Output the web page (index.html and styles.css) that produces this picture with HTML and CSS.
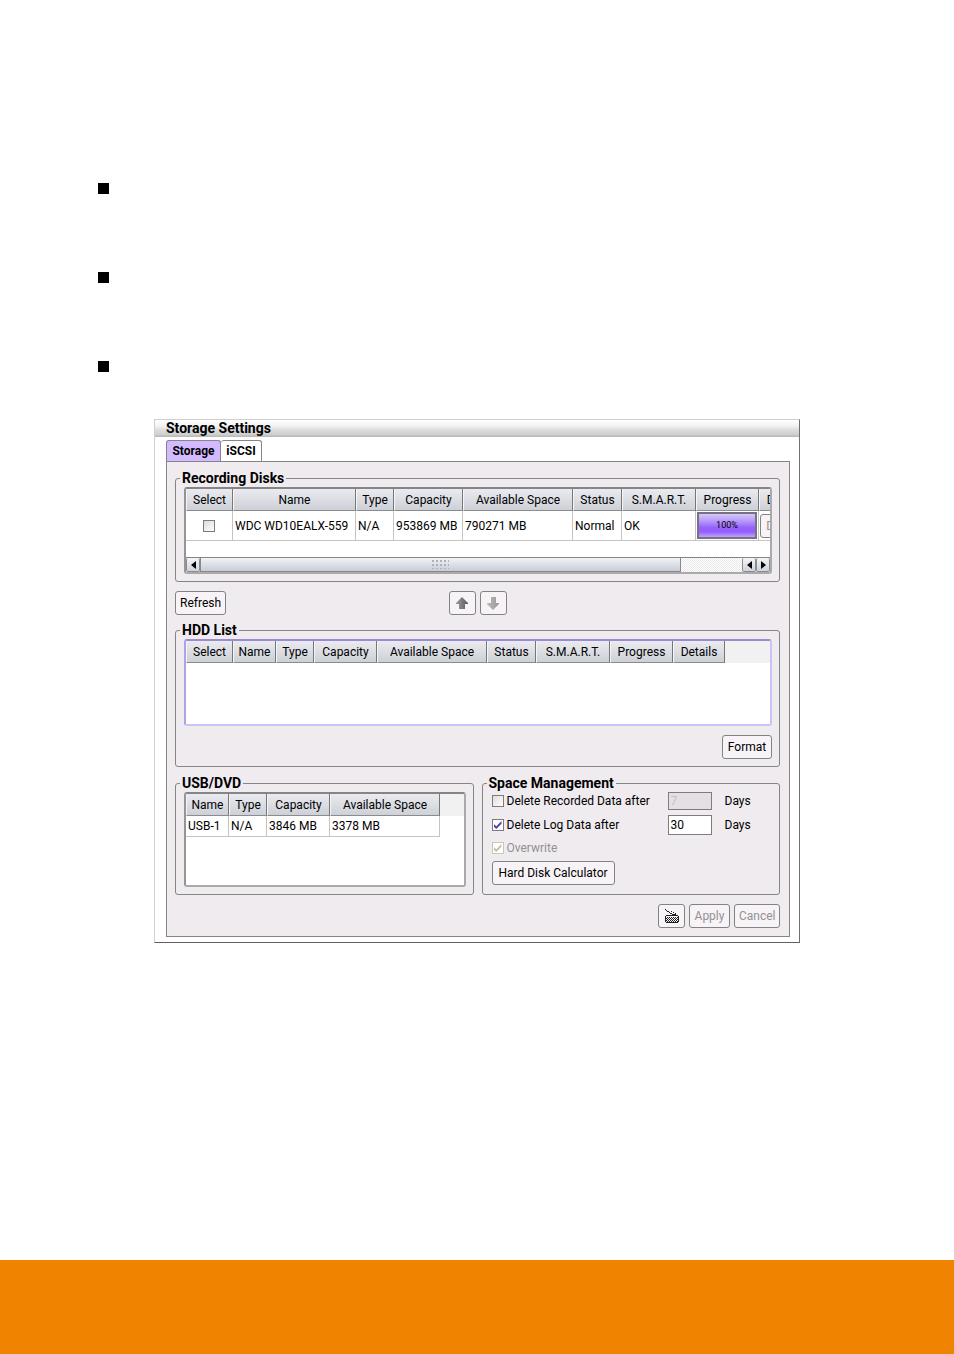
FILE: index.html
```html
<!DOCTYPE html>
<html lang="en">
<head>
<meta charset="utf-8">
<title>Storage Settings</title>
<link rel="stylesheet" href="styles.css">
</head>
<body>
<main class="page">
  <ul class="bullets">
    <li></li>
    <li></li>
    <li></li>
  </ul>

  <section class="window">
    <h1 class="window-title">Storage Settings</h1>
    <div class="window-body">
      <div class="tabs" role="tablist">
        <button class="tab tab-active" role="tab" aria-selected="true">Storage</button>
        <button class="tab" role="tab" aria-selected="false">iSCSI</button>
      </div>

      <div class="panel" role="tabpanel">
        <fieldset class="group">
          <legend>Recording Disks</legend>
          <div class="table-box disks-box">
            <div class="table-view">
              <table class="grid disks">
                <colgroup>
                  <col class="w-select"><col class="w-disk"><col class="w-type"><col class="w-capacity"><col class="w-space"><col class="w-status"><col class="w-smart"><col class="w-progress"><col class="w-details">
                </colgroup>
                <thead>
                  <tr><th>Select</th><th>Name</th><th>Type</th><th>Capacity</th><th>Available Space</th><th>Status</th><th>S.M.A.R.T.</th><th>Progress</th><th>Details</th></tr>
                </thead>
                <tbody>
                  <tr>
                    <td class="center"><input class="check" type="checkbox" aria-label="Select disk"></td>
                    <td>WDC WD10EALX-559</td>
                    <td>N/A</td>
                    <td>953869 MB</td>
                    <td>790271 MB</td>
                    <td>Normal</td>
                    <td>OK</td>
                    <td class="bar-cell"><div class="bar" role="progressbar" aria-valuenow="100">100%</div></td>
                    <td class="bar-cell"><button class="button details" disabled>Details</button></td>
                  </tr>
                </tbody>
              </table>
            </div>
            <div class="scrollbar">
              <button class="scroll-button" aria-label="Scroll left"><svg width="5" height="8" viewBox="0 0 5 8"><path d="M5 0v8L0 4z"/></svg></button>
              <div class="thumb"><span class="grip"></span></div>
              <div class="track"></div>
              <button class="scroll-button" aria-label="Scroll left"><svg width="5" height="8" viewBox="0 0 5 8"><path d="M5 0v8L0 4z"/></svg></button>
              <button class="scroll-button" aria-label="Scroll right"><svg width="5" height="8" viewBox="0 0 5 8"><path d="M0 0v8l5-4z"/></svg></button>
            </div>
          </div>
        </fieldset>

        <div class="middle">
          <button class="button refresh">Refresh</button>
          <div class="arrows">
            <button class="button icon-button" aria-label="Move up">
              <svg width="12" height="13" viewBox="0 0 12 13"><defs><linearGradient id="up" x2="1"><stop offset="0" stop-color="#9c9c9c"/><stop offset="1" stop-color="#5c5c5c"/></linearGradient></defs><path fill="url(#up)" d="M6 0l6 6v1H9v5H3V7H0V6z"/></svg>
            </button>
            <button class="button icon-button" aria-label="Move down">
              <svg width="12" height="13" viewBox="0 0 12 13"><defs><linearGradient id="down" x2="1"><stop offset="0" stop-color="#bcbcbc"/><stop offset="1" stop-color="#999"/></linearGradient></defs><path fill="url(#down)" d="M4 0h5v6h3v1l-6 6-6-6V6h4z"/></svg>
            </button>
          </div>
        </div>

        <fieldset class="group">
          <legend>HDD List</legend>
          <div class="table-box focused">
            <table class="grid">
              <colgroup>
                <col class="w-select"><col class="w-name"><col class="w-type"><col class="w-capacity-s"><col class="w-space"><col class="w-status"><col class="w-smart"><col class="w-progress"><col class="w-details">
              </colgroup>
              <thead>
                <tr><th>Select</th><th>Name</th><th>Type</th><th>Capacity</th><th>Available Space</th><th>Status</th><th>S.M.A.R.T.</th><th>Progress</th><th>Details</th></tr>
              </thead>
            </table>
          </div>
          <div class="format-row"><button class="button format">Format</button></div>
        </fieldset>

        <div class="bottom">
          <fieldset class="group">
            <legend>USB/DVD</legend>
            <div class="table-box usb-box">
              <table class="grid usb">
                <colgroup>
                  <col class="w-name"><col class="w-type"><col class="w-capacity-s"><col class="w-space">
                </colgroup>
                <thead>
                  <tr><th>Name</th><th>Type</th><th>Capacity</th><th>Available Space</th></tr>
                </thead>
                <tbody>
                  <tr><td>USB-1</td><td>N/A</td><td>3846 MB</td><td>3378 MB</td></tr>
                </tbody>
              </table>
            </div>
          </fieldset>

          <fieldset class="group">
            <legend>Space Management</legend>
            <div class="options">
              <label class="option"><input class="check" type="checkbox">Delete Recorded Data after</label>
              <input class="field" id="data-days" type="text" value="7" disabled>
              <label for="data-days">Days</label>
              <label class="option"><input class="check" type="checkbox" checked>Delete Log Data after</label>
              <input class="field" id="log-days" type="text" value="30">
              <label for="log-days">Days</label>
              <label class="option option-off"><input class="check" type="checkbox" checked disabled>Overwrite</label>
            </div>
            <button class="button calculator">Hard Disk Calculator</button>
          </fieldset>
        </div>

        <div class="actions">
          <button class="button icon-button" aria-label="Keyboard">
            <svg width="14" height="14" viewBox="0 0 14 14" shape-rendering="crispEdges" fill="#222"><path d="M0 0h1v1H0zM1 1h1v1H1zM2 2h2v1H2zM4 3h1v1H4zM6 2h1v1H6zM5 4h2v1H5zM8 3h1v1H8zM7 5h2v1H7zM10 4h1v1h-1zM9 5h2v1H9zM1 6h12v1H1zM0 7h1v6H0zM13 7h1v6h-1zM1 13h12v1H1z"/><path d="M2 8h1v1H2zM4 8h1v1H4zM6 8h1v1H6zM8 8h1v1H8zM10 8h1v1h-1zM12 8h1v1h-1zM1 9h1v1H1zM3 9h1v1H3zM5 9h1v1H5zM7 9h1v1H7zM9 9h1v1H9zM11 9h1v1h-1zM2 10h1v1H2zM4 10h1v1H4zM6 10h1v1H6zM8 10h1v1H8zM10 10h1v1h-1zM12 10h1v1h-1zM1 11h1v1H1zM3 11h1v1H3zM5 11h1v1H5zM7 11h1v1H7zM9 11h1v1H9zM11 11h1v1h-1zM2 12h1v1H2zM4 12h1v1H4zM6 12h1v1H6zM8 12h1v1H8zM10 12h1v1h-1zM12 12h1v1h-1z"/></svg>
          </button>
          <button class="button apply" disabled>Apply</button>
          <button class="button cancel" disabled>Cancel</button>
        </div>
      </div>
    </div>
  </section>
</main>
<footer class="page-footer"></footer>
</body>
</html>
```

FILE: styles.css
```css
* { box-sizing: border-box; }

body {
  margin: 0;
  min-height: 100vh;
  display: flex;
  flex-direction: column;
  background: #fff;
  color: #000;
  font: 12px/16px Roboto, "Liberation Sans", sans-serif;
}

button, input { font: inherit; color: inherit; }

.page { padding: 183px 154px 0; }

.bullets {
  list-style: none;
  margin: 0 0 47px -56px;
  padding: 0;
  display: grid;
  gap: 78px;
}
.bullets li { width: 11px; height: 11px; background: #000; }

.page-footer { height: 94px; margin-top: auto; background: #f08300; }

/* Window frame */
.window {
  border: 1px solid #d0d0d0;
  border-right-color: #707070;
  border-bottom-color: #606060;
}
.window-title {
  margin: 0;
  padding: 0 11px;
  font-size: 14px;
  line-height: 17px;
  background: linear-gradient(#fff 0, #f4f2f4 35%, #dcdcdc 60%, #cfcfcf 85%, #b4b4b4 100%);
}
.window-body { padding: 3px 9px 5px 11px; }

.tabs { display: flex; height: 21px; }
.tab {
  min-width: 41px;
  padding: 0 5px;
  border: 1px solid #868686;
  border-bottom: 0;
  border-left: 0;
  border-radius: 3px 3px 0 0;
  background: #fff;
  font-weight: 700;
}
.tab-active { min-width: 55px; border-left: 1px solid #868686; background: #d3b9ff; }

.panel {
  border: 1px solid #858585;
  padding: 8px 9px 8px 8px;
  background: #efebef;
}

/* Groups */
.group {
  min-width: 0;
  margin: 0;
  padding: 1px 7px 7px 8px;
  border: 1px solid #838783;
  border-radius: 3px;
}
.group legend { margin-left: -4px; padding: 0 2px; font-size: 14px; font-weight: 700; }

.table-box {
  height: 87px;
  overflow: hidden;
  display: flex;
  flex-direction: column;
  border: 2px solid #aaa;
  border-top-color: #858585;
  border-left-color: #959595;
  border-radius: 3px;
  background: #fff;
}
.focused { border-color: #9c8bd0 #cbc2fa #cbc2fa #b0a2e6; }
.usb-box { height: 95px; }
.table-view { flex: 1; overflow: hidden; }

.focused, .usb-box { background: linear-gradient(#f1f1f1 22px, #fff 22px); }

.grid { width: 0; table-layout: fixed; border-collapse: separate; border-spacing: 0; }
.grid th {
  height: 22px;
  padding: 0;
  border-right: 1px solid #777;
  border-bottom: 1px solid #8c8c8c;
  border-left: 1px solid #f5f5f8;
  background: linear-gradient(#e9ebf0, #dcdee4 50%, #cdd0d7);
  font-weight: 400;
  white-space: nowrap;
}
.grid td {
  height: 30px;
  padding: 0 0 0 2px;
  border-right: 1px solid #c4c4c4;
  border-bottom: 1px solid #c4c4c4;
  background: #fff;
  white-space: nowrap;
}
.grid.usb td { height: 21px; }
.grid .center { padding: 0; text-align: center; }
.grid .bar-cell { padding: 0 1px; }

.w-select { width: 47px; }
.w-disk { width: 123px; }
.w-name { width: 43px; }
.w-type { width: 38px; }
.w-capacity { width: 69px; }
.w-capacity-s { width: 63px; }
.w-space { width: 110px; }
.w-status { width: 49px; }
.w-smart { width: 74px; }
.w-progress { width: 63px; }
.w-details { width: 52px; }

.bar {
  height: 27px;
  border: 2px solid #77737e;
  background: linear-gradient(#d6c6fa 0, #b191fa 35%, #9560fb 60%, #9460fb 78%, #bfa3fb 100%);
  font-size: 9px;
  line-height: 23px;
  text-align: center;
}

.scrollbar { display: flex; height: 15px; border-top: 1px solid #858585; }
.scroll-button {
  width: 14px;
  padding: 0;
  display: flex;
  align-items: center;
  justify-content: center;
  border: 1px solid #8a8d94;
  border-top: 0;
  border-radius: 2px;
  background: linear-gradient(#f5f6fa, #d0d3db);
}
.thumb {
  flex: 481;
  display: flex;
  align-items: center;
  justify-content: center;
  border: 1px solid #85888f;
  border-top: 0;
  background: linear-gradient(#f2f3f6, #dcdfe5 50%, #c9ccd4);
}
.grip { width: 17px; height: 9px; background: radial-gradient(circle at 1px 1px, #aeb1b8 1px, transparent 1px) 0 0 / 4px 4px; }
.track { flex: 61; background: repeating-conic-gradient(#e9e9e9 0 25%, #fff 0 50%) 0 0 / 2px 2px; }

/* Controls */
.button {
  height: 24px;
  padding: 0 4px;
  border: 1px solid #7f857f;
  border-radius: 3px;
  background: #f7f3f7;
  white-space: nowrap;
}
.button:disabled { color: #929292; }
.icon-button {
  width: 27px;
  padding: 0;
  display: flex;
  align-items: center;
  justify-content: center;
}
.refresh { width: 51px; }
.format { width: 50px; }
.calculator { width: 123px; margin: 5px 0 0 1px; }
.apply { width: 41px; }
.cancel { width: 46px; }
.button.details { display: block; width: 49px; padding: 0 2px; }

.middle {
  display: grid;
  grid-template-columns: 1fr auto 1fr;
  margin: 9px 0 7px;
}
.arrows { display: flex; gap: 4px; }

.format-row { display: flex; justify-content: flex-end; margin-top: 9px; }

.bottom { display: grid; grid-template-columns: 1fr 1fr; gap: 8px; margin-top: 8px; }

.check {
  appearance: none;
  flex: none;
  width: 12px;
  height: 12px;
  margin: 0;
  vertical-align: middle;
  border: 1px solid #7c7c7c;
  background: linear-gradient(135deg, #dcdcd8, #fff);
}
.check:checked {
  background: #fff;
  display: grid;
  place-items: center;
}
.check:checked::before {
  content: "";
  width: 8px;
  height: 8px;
  background: #5540a8;
  clip-path: polygon(0 35%, 35% 65%, 100% 0, 100% 35%, 35% 100%, 0 70%);
}
.check:disabled { border-color: #c9c7b8; }
.check:disabled::before { background: #c2bfae; }

.options {
  display: grid;
  grid-template-columns: 176px 44px 1fr;
  grid-template-rows: 18px 20px 16px;
  row-gap: 5px;
  margin-left: 1px;
  align-items: center;
}
.options > label:not(.option) { padding-left: 13px; }
.option { display: flex; align-items: center; gap: 3px; white-space: nowrap; }
.option-off { color: #929292; }
.field {
  width: 100%;
  height: 100%;
  padding: 0 2px;
  border: 1px solid #7d7d7d;
  background: #fff;
}
.field:disabled { background: #e5e0e5; color: #c5c0c5; }

.actions { display: flex; justify-content: flex-end; gap: 4px; margin-top: 9px; }
```
